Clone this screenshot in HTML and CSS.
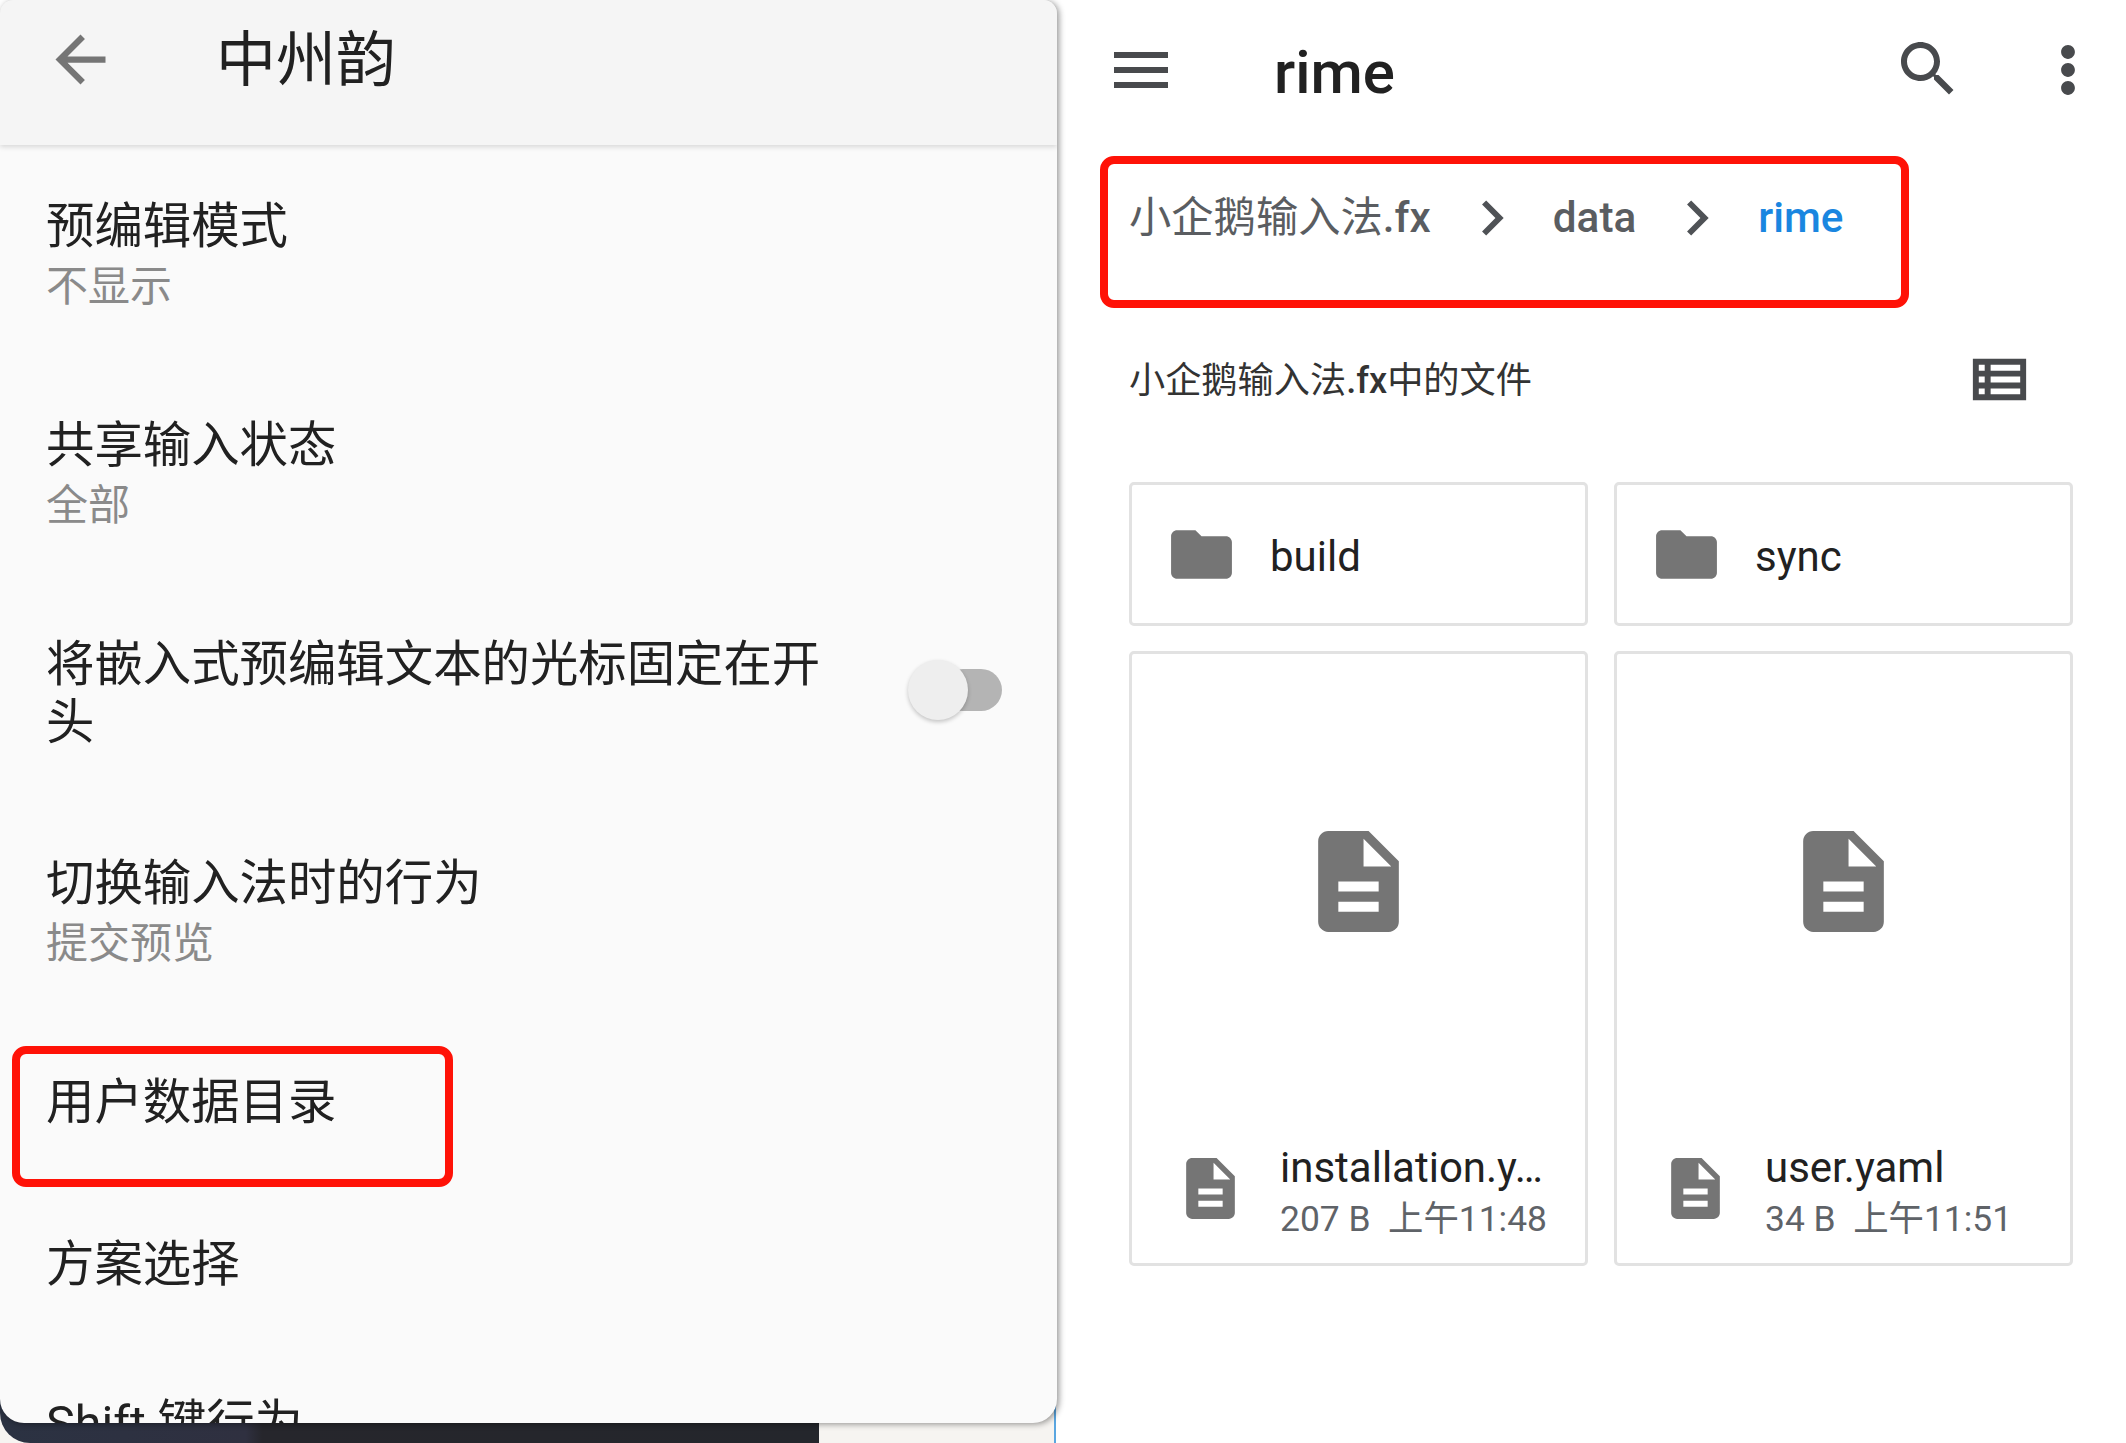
FILE: index.html
```html
<!DOCTYPE html>
<html lang="zh-CN">
<head>
<meta charset="utf-8">
<title>中州韵 / rime</title>
<link rel="stylesheet" href="styles.css">
</head>
<body>
<div class="screen">
  <section class="left">
    <div class="panel">
      <header class="pref-bar">
        <svg class="back" viewBox="0 0 24 24"><path d="M20 11H7.83l5.59-5.59L12 4l-8 8 8 8 1.41-1.41L7.83 13H20v-2z"/></svg>
        <h1 class="pref-title">中州韵</h1>
      </header>
      <div class="pref-list">
        <div class="item"><div class="item-title">预编辑模式</div><div class="item-sub">不显示</div></div>
        <div class="item"><div class="item-title">共享输入状态</div><div class="item-sub">全部</div></div>
        <div class="item item-row">
          <div class="item-title wrap">将嵌入式预编辑文本的光标固定在开头</div>
          <div class="switch"><span class="track"></span><span class="thumb"></span></div>
        </div>
        <div class="item"><div class="item-title">切换输入法时的行为</div><div class="item-sub">提交预览</div></div>
        <div class="item has-mark"><div class="item-title">用户数据目录</div><span class="mark"></span></div>
        <div class="item"><div class="item-title">方案选择</div></div>
        <div class="item"><div class="item-title">Shift 键行为</div></div>
      </div>
    </div>
    <div class="under"><div class="dock"></div></div>
  </section>

  <section class="right">
    <header class="app-bar">
      <svg class="ic menu" viewBox="0 0 24 24"><path d="M3 18h18v-2H3v2zm0-5h18v-2H3v2zm0-7v2h18V6H3z"/></svg>
      <div class="app-title">rime</div>
      <svg class="ic search" viewBox="0 0 24 24"><path d="M15.5 14h-.79l-.28-.27C15.41 12.59 16 11.11 16 9.5 16 5.91 13.09 3 9.5 3S3 5.91 3 9.5 5.91 16 9.5 16c1.61 0 3.09-.59 4.23-1.57l.27.28v.79l5 4.99L20.49 19l-4.99-5zm-6 0C7.01 14 5 11.99 5 9.5S7.01 5 9.5 5 14 7.01 14 9.5 11.99 14 9.5 14z"/></svg>
      <svg class="ic more" viewBox="0 0 24 24"><path d="M12 8.3c1.25 0 2.3-1.05 2.3-2.3S13.25 3.7 12 3.7 9.7 4.75 9.7 6 10.75 8.3 12 8.3zm0 1.4c-1.25 0-2.3 1.05-2.3 2.3s1.05 2.3 2.3 2.3 2.3-1.05 2.3-2.3-1.05-2.3-2.3-2.3zm0 6c-1.25 0-2.3 1.05-2.3 2.3s1.05 2.3 2.3 2.3 2.3-1.05 2.3-2.3-1.05-2.3-2.3-2.3z"/></svg>
    </header>

    <nav class="crumbs">
      <span class="crumb">小企鹅输入法<b class="latin">.fx</b></span>
      <svg class="chev" viewBox="0 0 24 24"><path d="M10 6L8.59 7.41 13.17 12l-4.58 4.59L10 18l6-6z"/></svg>
      <span class="crumb latin">data</span>
      <svg class="chev" viewBox="0 0 24 24"><path d="M10 6L8.59 7.41 13.17 12l-4.58 4.59L10 18l6-6z"/></svg>
      <span class="crumb latin current">rime</span>
    </nav>

    <div class="sub-head">
      <span class="sub-text">小企鹅输入法<b class="latin">.fx</b>中的文件</span>
      <svg class="list-ic" viewBox="0 0 24 24"><path d="M3 5v14h18V5H3zm4 2v2H5V7h2zm-2 6v-2h2v2H5zm0 2h2v2H5v-2zm14 2H9v-2h10v2zm0-4H9v-2h10v2zm0-4H9V7h10v2z"/></svg>
    </div>

    <div class="grid">
      <div class="card folder">
        <svg class="folder-ic" viewBox="0 0 24 24"><path d="M10 4H4c-1.1 0-2 .9-2 2v12c0 1.1.9 2 2 2h16c1.1 0 2-.9 2-2V8c0-1.1-.9-2-2-2h-8l-2-2z"/></svg>
        <span class="folder-name">build</span>
      </div>
      <div class="card folder">
        <svg class="folder-ic" viewBox="0 0 24 24"><path d="M10 4H4c-1.1 0-2 .9-2 2v12c0 1.1.9 2 2 2h16c1.1 0 2-.9 2-2V8c0-1.1-.9-2-2-2h-8l-2-2z"/></svg>
        <span class="folder-name">sync</span>
      </div>
      <div class="card file">
        <div class="preview">
          <svg class="doc-lg" viewBox="0 0 24 24"><path d="M14 2H6c-1.1 0-2 .9-2 2v16c0 1.1.9 2 2 2h12c1.1 0 2-.9 2-2V8l-6-6zm2 16H8v-2h8v2zm0-4H8v-2h8v2zm-3-5V3.5L18.5 9H13z"/></svg>
        </div>
        <div class="file-foot">
          <svg class="doc-sm" viewBox="0 0 24 24"><path d="M14 2H6c-1.1 0-2 .9-2 2v16c0 1.1.9 2 2 2h12c1.1 0 2-.9 2-2V8l-6-6zm2 16H8v-2h8v2zm0-4H8v-2h8v2zm-3-5V3.5L18.5 9H13z"/></svg>
          <div class="file-text">
            <div class="file-name">installation.y…</div>
            <div class="file-meta">207 B&nbsp; 上午11:48</div>
          </div>
        </div>
      </div>
      <div class="card file">
        <div class="preview">
          <svg class="doc-lg" viewBox="0 0 24 24"><path d="M14 2H6c-1.1 0-2 .9-2 2v16c0 1.1.9 2 2 2h12c1.1 0 2-.9 2-2V8l-6-6zm2 16H8v-2h8v2zm0-4H8v-2h8v2zm-3-5V3.5L18.5 9H13z"/></svg>
        </div>
        <div class="file-foot">
          <svg class="doc-sm" viewBox="0 0 24 24"><path d="M14 2H6c-1.1 0-2 .9-2 2v16c0 1.1.9 2 2 2h12c1.1 0 2-.9 2-2V8l-6-6zm2 16H8v-2h8v2zm0-4H8v-2h8v2zm-3-5V3.5L18.5 9H13z"/></svg>
          <div class="file-text">
            <div class="file-name">user.yaml</div>
            <div class="file-meta">34 B&nbsp; 上午11:51</div>
          </div>
        </div>
      </div>
    </div>
  </section>
</div>
</body>
</html>
```
FILE: styles.css
```css
* { box-sizing: border-box; }
html, body { margin: 0; padding: 0; height: 100%; }
body {
  background: #fff;
  font-family: Roboto, "Noto Sans CJK SC", sans-serif;
  overflow: hidden;
}
.screen { display: flex; width: 2126px; height: 1443px; }

/* Left: preferences window */
.left { width: 1057px; flex: none; display: flex; flex-direction: column; }
.panel {
  position: relative;
  z-index: 1;
  height: 1423px;
  flex: none;
  background: #fafafa;
  border-radius: 14px 14px 24px 24px;
  box-shadow: 2px 1px 6px rgba(0,0,0,.42);
  overflow: hidden;
}
.pref-bar {
  height: 145px;
  display: flex;
  align-items: center;
  padding: 0 0 24px 43px;
  background: #f5f5f5;
  box-shadow: 0 2px 5px rgba(0,0,0,.14);
  position: relative;
}
.back { width: 75px; height: 75px; fill: #757575; flex: none; margin-top: -2px; }
.pref-title { margin: 0 0 0 98px; font-size: 60px; font-weight: 400; color: #212121; line-height: 70px; }
.pref-list { display: flex; flex-direction: column; }
.item { position: relative; padding: 53px 55px 48px 46px; flex: none; }
.item-title { font-size: 48.4px; line-height: 58px; color: #212121; }
.item-sub { font-size: 42px; line-height: 58px; padding-top: 2px; color: #8a8a8a; }
.item-row { display: flex; align-items: center; padding-bottom: 50px; }
.wrap { width: 790px; flex: none; }
.switch { position: relative; width: 94px; height: 60px; margin: 0 0 8px 72px; display: flex; align-items: center; justify-content: flex-end; }
.track { width: 60px; height: 42px; border-radius: 21px; background: #b4b4b4; }
.thumb { position: absolute; left: 0; top: 0; width: 60px; height: 60px; border-radius: 50%; background: #eeeeee; box-shadow: 0 2px 4px rgba(0,0,0,.22); }
.has-mark { padding-bottom: 51px; }
.mark {
  position: absolute;
  left: 12px;
  top: 25px;
  width: 441px;
  height: 141px;
  border: 8px solid #ff1207;
  border-radius: 14px;
}
.under {
  width: 1056px;
  height: 50px;
  margin-top: -30px;
  flex: none;
  background: #f6f4f1;
  border-right: 2px solid #5aa6e0;
}
.dock {
  width: 819px;
  height: 100%;
  border-radius: 0 0 0 30px;
  background: linear-gradient(90deg, #2b3242 0%, #2f3040 30%, #26262c 32%, #24262c 100%);
}

/* Right: file browser */
.right { flex: 1; min-width: 0; background: #fff; display: flex; flex-direction: column; }
.app-bar { height: 140px; display: flex; align-items: center; padding: 0 22px 0 48px; }
.ic { width: 72px; height: 72px; fill: #484a4d; flex: none; }
.app-title { margin-left: 97px; flex: 1; font-size: 60px; font-weight: 500; color: #212121; padding-top: 4px; }
.search { margin-right: 68px; margin-top: -2px; }
.crumbs {
  margin: 16px 0 0 43px;
  width: 809px;
  height: 152px;
  flex: none;
  border: 8px solid #ff1207;
  border-radius: 14px;
  padding: 19px 0 0 21px;
  display: flex;
  align-items: flex-start;
}
.crumb { font-size: 42.3px; line-height: 70px; color: #5a5d61; white-space: nowrap; }
.latin { font-family: Roboto, sans-serif; font-weight: 500; }
.chev { width: 70px; height: 70px; fill: #4f5256; flex: none; margin: 0 26px; }
.current { color: #1a86e0; }
.sub-head { height: 145px; flex: none; margin-bottom: 29px; display: flex; align-items: center; justify-content: space-between; padding: 0 91px 0 72px; }
.sub-text { font-size: 36.2px; line-height: 50px; color: #333; }
.list-ic { width: 71px; height: 71px; fill: #484a4d; margin-top: -2px; }
.grid {
  margin-left: 72px;
  display: grid;
  grid-template-columns: 459px 459px;
  grid-template-rows: 144px 615px;
  gap: 25px 26px;
}
.card { border: 3px solid #e2e2e2; border-radius: 5px; background: #fff; }
.folder { display: flex; align-items: center; padding-left: 33px; }
.folder-ic { width: 73px; height: 73px; fill: #757575; flex: none; }
.folder-name { margin-left: 32px; padding-top: 5px; font-size: 42px; color: #212121; }
.file { display: flex; flex-direction: column; }
.preview { flex: 1; display: flex; align-items: center; justify-content: center; padding-bottom: 24px; }
.doc-lg { width: 121px; height: 121px; fill: #757575; }
.file-foot { display: flex; align-items: center; height: 130px; flex: none; padding: 0 0 14px 42px; }
.doc-sm { width: 73px; height: 73px; fill: #757575; flex: none; margin-bottom: 6px; }
.file-text { margin: 4px 0 0 33px; min-width: 0; }
.file-name { font-size: 42px; line-height: 50px; color: #212121; white-space: nowrap; }
.file-meta { font-size: 35.4px; line-height: 50px; margin-top: 1px; color: #5f6368; white-space: nowrap; }
```
